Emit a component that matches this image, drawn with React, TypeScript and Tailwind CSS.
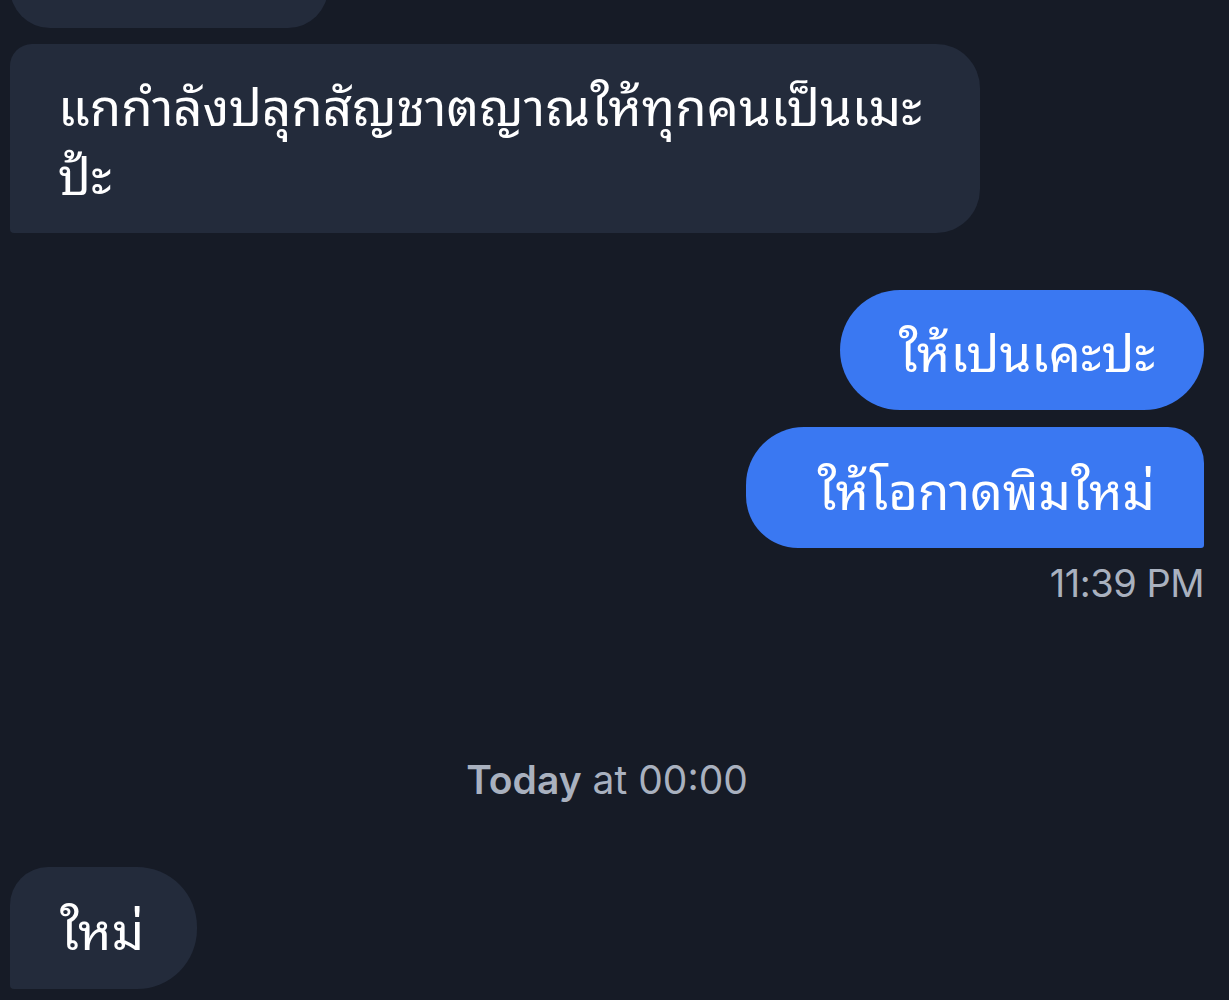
import React from "react";

const thai = {
  fontFamily:
    '"Noto Sans Thai Looped", "Loma", "Garuda", "Waree", "Norasi", "Kinnari", "Inter", "Noto Sans", sans-serif',
};

export default function App() {
  return (
    <div
      className="w-[1229px] h-[1000px] overflow-hidden bg-[#161b26] text-white"
      style={{ fontFamily: '"Inter", "Noto Sans", "DejaVu Sans", sans-serif' }}
    >
      <div className="flex flex-col pl-[10px] pr-[25px]">
        {/* cut-off previous bubble */}
        <div className="mt-[-92px] h-[120px] w-[318px] self-start rounded-tl-[20px] rounded-tr-[40px] rounded-br-[40px] rounded-bl-[40px] bg-[#232b3b]" />

        <div
          style={thai}
          className="mt-[16px] h-[189px] w-[970px] self-start rounded-tl-[22px] rounded-tr-[44px] rounded-br-[44px] rounded-bl-[4px] bg-[#232b3b] py-[25px] pl-[48px] pr-[20px] text-[51px] leading-[69px]"
        >
          แกกำลังปลุกสัญชาตญาณให้ทุกคนเป็นเมะ
          <br />
          ป้ะ
        </div>

        <div
          style={thai}
          className="mt-[57px] h-[120px] w-[364px] self-end whitespace-nowrap rounded-[60px] bg-[#3a78f2] py-[25px] pr-[49px] text-right text-[51px] leading-[69px]"
        >
          ให้เปนเคะปะ
        </div>

        <div
          style={thai}
          className="mt-[17px] h-[121px] w-[458px] self-end whitespace-nowrap rounded-tl-[58px] rounded-tr-[36px] rounded-br-[3px] rounded-bl-[52px] bg-[#3a78f2] py-[26px] pr-[49px] text-right text-[51px] leading-[69px]"
        >
          ให้โอกาดพิมใหม่
        </div>

        <div className="mt-[12px] self-end text-[38px] leading-[46px] tracking-[-0.5px] text-[#a9b1bf]">
          11:39 PM
        </div>

        <div className="mt-[152px] self-center text-[39px] leading-[44px] text-[#a9b1bf]">
          <span className="font-semibold">Today</span> at 00:00
        </div>

        <div
          style={thai}
          className="mt-[65px] h-[122px] w-[187px] self-start whitespace-nowrap rounded-tl-[38px] rounded-tr-[60px] rounded-br-[60px] rounded-bl-[4px] bg-[#232b3b] py-[26px] pl-[50px] text-[51px] leading-[69px]"
        >
          ใหม่
        </div>
      </div>
    </div>
  );
}
